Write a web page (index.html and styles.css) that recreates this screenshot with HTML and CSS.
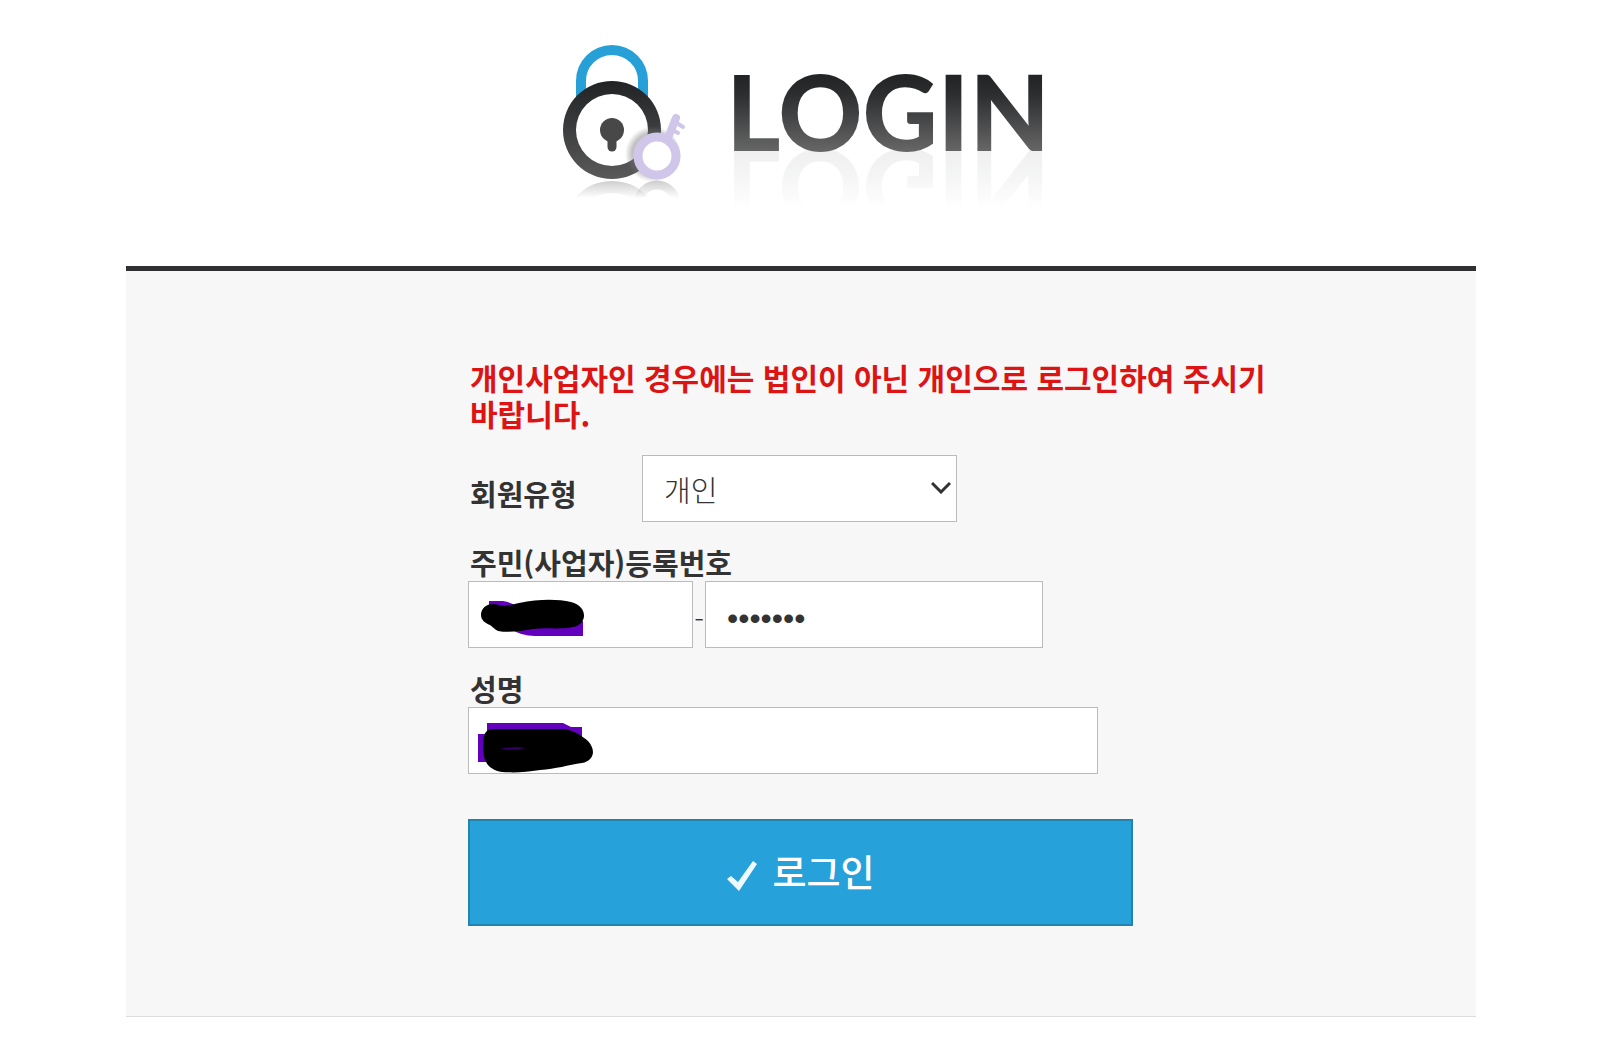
FILE: index.html
```html
<!DOCTYPE html>
<html lang="ko">
<head>
  <meta charset="UTF-8">
  <meta name="viewport" content="width=device-width, initial-scale=1.0">
  <title>로그인</title>
  <link rel="stylesheet" href="styles.css">
</head>
<body>

<header class="header">
  <svg class="logo" viewBox="22 15 124 156" aria-hidden="true">
    <defs>
      <linearGradient id="ring" x1="0" y1="0" x2="0" y2="1">
        <stop offset="0" stop-color="#202224"/>
        <stop offset="1" stop-color="#5a5a5a"/>
      </linearGradient>
      <linearGradient id="fade" x1="0" y1="150" x2="0" y2="168" gradientUnits="userSpaceOnUse">
        <stop offset="0" stop-color="#999" stop-opacity="0.5"/>
        <stop offset="1" stop-color="#999" stop-opacity="0"/>
      </linearGradient>
      <radialGradient id="shade">
        <stop offset="0.75" stop-color="#777" stop-opacity="0.45"/>
        <stop offset="1" stop-color="#777" stop-opacity="0"/>
      </radialGradient>
      <clipPath id="floor">
        <rect x="22" y="150" width="124" height="20"/>
      </clipPath>
    </defs>
    <!-- padlock -->
    <path d="M41 70V51a31 31 0 0 1 62 0v19" fill="none" stroke="#27a0d8" stroke-width="10"/>
    <circle cx="72" cy="100" r="42" fill="#fff"/>
    <path fill="url(#ring)" fill-rule="evenodd" d="M72 51a49 49 0 1 0 0 98a49 49 0 1 0 0-98zM72 64a36 36 0 1 1 0 72a36 36 0 1 1 0-72z"/>
    <circle cx="72" cy="100" r="12" fill="#484848"/>
    <path d="M72 104v13" stroke="#484848" stroke-width="9" stroke-linecap="round"/>
    <!-- key -->
    <circle cx="113" cy="124" r="28" fill="url(#shade)"/>
    <circle cx="117" cy="126" r="19" fill="#fff" stroke="#cfc6ea" stroke-width="9"/>
    <path d="M128 108l8-20" stroke="#cfc6ea" stroke-width="8" stroke-linecap="round"/>
    <path d="M135 92l8 5M131 99l7 4" stroke="#cfc6ea" stroke-width="4" stroke-linecap="round"/>
    <g clip-path="url(#floor)" fill="none" stroke="url(#fade)">
      <circle cx="72" cy="200" r="43" stroke-width="12"/>
      <circle cx="117" cy="174" r="19" stroke-width="9"/>
    </g>
  </svg>
  <h1 class="title">LOGIN</h1>
</header>

<main class="panel">
  <form class="login-form">
    <p class="notice">개인사업자인 경우에는 법인이 아닌 개인으로 로그인하여 주시기 바랍니다.</p>

    <div class="row">
      <label class="type-label" for="memberType">회원유형</label>
      <div class="select-box">
        <select id="memberType">
          <option>개인</option>
          <option>법인</option>
        </select>
        <svg class="arrow" viewBox="0 0 20 12" aria-hidden="true">
          <path d="M1 1l9 9 9-9" fill="none" stroke="#333" stroke-width="3"/>
        </svg>
      </div>
    </div>

    <div class="field">
      <label for="regNo1">주민(사업자)등록번호</label>
      <div class="number">
        <div class="masked front">
          <input type="text" id="regNo1">
          <svg class="mark" viewBox="0 0 124 65" aria-hidden="true">
            <path d="M20 19h14q12 2 20 10l60 10v15H66q-14 0-24-7L20 30z" fill="#6200bd"/>
            <path d="M12 33c0-8 8-13 18-10c7 2 10 0 20-2c20-4 38-4 52-1c17 4 17 22 2 25c-14 3-26 0-40 2c-12 2-24 4-35 2c-4-2-5-4-8-6c-5-2-9-5-9-10z"/>
          </svg>
        </div>
        <span class="dash">-</span>
        <input class="back" type="password" id="regNo2" value="1234567" aria-label="주민(사업자)등록번호 뒷자리">
      </div>
    </div>

    <div class="field">
      <label for="userName">성명</label>
      <div class="masked name">
        <input type="text" id="userName">
        <svg class="mark" viewBox="0 0 134 65" aria-hidden="true">
          <path d="M18 15h76l8 4h11v16H18zM9 26h10v28H9z" fill="#6200bd"/>
          <path d="M22 21h72c11 1 19 7 25 12c9 10 5 20-6 22c-14 2-26 6-42 7c-14 2-24 3-38 2c-13-2-19-10-19-24c0-9 0-17 8-19z"/>
          <path d="M31 41q13-3 26-1q-13 3-26 1z" fill="#34006a"/>
        </svg>
      </div>
    </div>

    <button class="submit" type="submit">
      <svg class="check" viewBox="0 0 32 32" aria-hidden="true">
        <path d="M1 19l4-3 7 6L27 1l4 3-18 27z" fill="#eefaff"/>
      </svg>
      로그인
    </button>
  </form>
</main>

</body>
</html>
```
FILE: styles.css
```css
* {
  box-sizing: border-box;
}

body {
  margin: 0;
  padding: 0 136px 0 126px;
  background-color: #fff;
  color: #333;
  font-family: "Noto Sans CJK KR", sans-serif;
  font-size: 29px;
  line-height: 36px;
}

.header {
  display: flex;
  justify-content: center;
  gap: 40px;
  padding: 45px 0 65px 10px;
}

.logo {
  width: 124px;
  height: 156px;
}

.title {
  align-self: flex-start;
  margin: 0;
  padding-top: 14px;
  font-family: Lato, sans-serif;
  font-size: 104px;
  font-weight: 900;
  line-height: 104px;
  color: transparent;
  background: linear-gradient(#222426 32px, #2c2e30 50px, #666 106px);
  -webkit-background-clip: text;
  background-clip: text;
  -webkit-box-reflect: below -26px linear-gradient(transparent 40%, rgba(0, 0, 0, 0.12));
}

.panel {
  padding: 88px 20px 90px 342px;
  border-top: 5px solid #303033;
  border-bottom: 1px solid #ddd;
  background-color: #f7f7f7;
}

.login-form {
  max-width: 800px;
}

.notice {
  margin: 0 0 24px;
  padding-left: 2px;
  color: #dc1414;
  font-size: 30px;
  font-weight: 700;
}

label {
  display: block;
  padding: 0 0 1px 2px;
  font-weight: 700;
}

input,
select {
  display: block;
  width: 100%;
  height: 67px;
  padding: 0 21px;
  border: 1px solid #bbb;
  border-radius: 0;
  background-color: #fff;
  color: #333;
  font-family: inherit;
  font-size: 29px;
}

select {
  appearance: none;
  font-weight: 300;
}

.row {
  display: flex;
  align-items: center;
}

.type-label {
  width: 174px;
  padding-top: 10px;
}

.select-box {
  position: relative;
  width: 315px;
}

.arrow {
  position: absolute;
  top: 27px;
  right: 6px;
  width: 20px;
  height: 12px;
  pointer-events: none;
}

.field {
  margin-top: 22px;
}

.number {
  display: flex;
  align-items: center;
}

.masked {
  position: relative;
}

.mark {
  position: absolute;
  top: 1px;
  left: 1px;
  height: 65px;
  pointer-events: none;
}

.front {
  width: 225px;
}

.dash {
  width: 12px;
  padding-top: 6px;
  font-size: 29px;
  font-weight: 300;
  text-align: center;
}

.back {
  width: 338px;
  padding-top: 8px;
  font-family: "Liberation Sans", sans-serif;
  font-size: 32px;
}

.name {
  width: 630px;
}

.submit {
  display: flex;
  justify-content: center;
  align-items: center;
  gap: 14px;
  width: 665px;
  max-width: 100%;
  height: 107px;
  margin-top: 45px;
  padding-bottom: 4px;
  border: 2px solid #2183ae;
  background-color: #26a1d9;
  color: #fff;
  font-family: inherit;
  font-size: 37px;
  font-weight: 500;
  cursor: pointer;
}

.check {
  width: 32px;
  height: 32px;
  margin-top: 10px;
}
```
